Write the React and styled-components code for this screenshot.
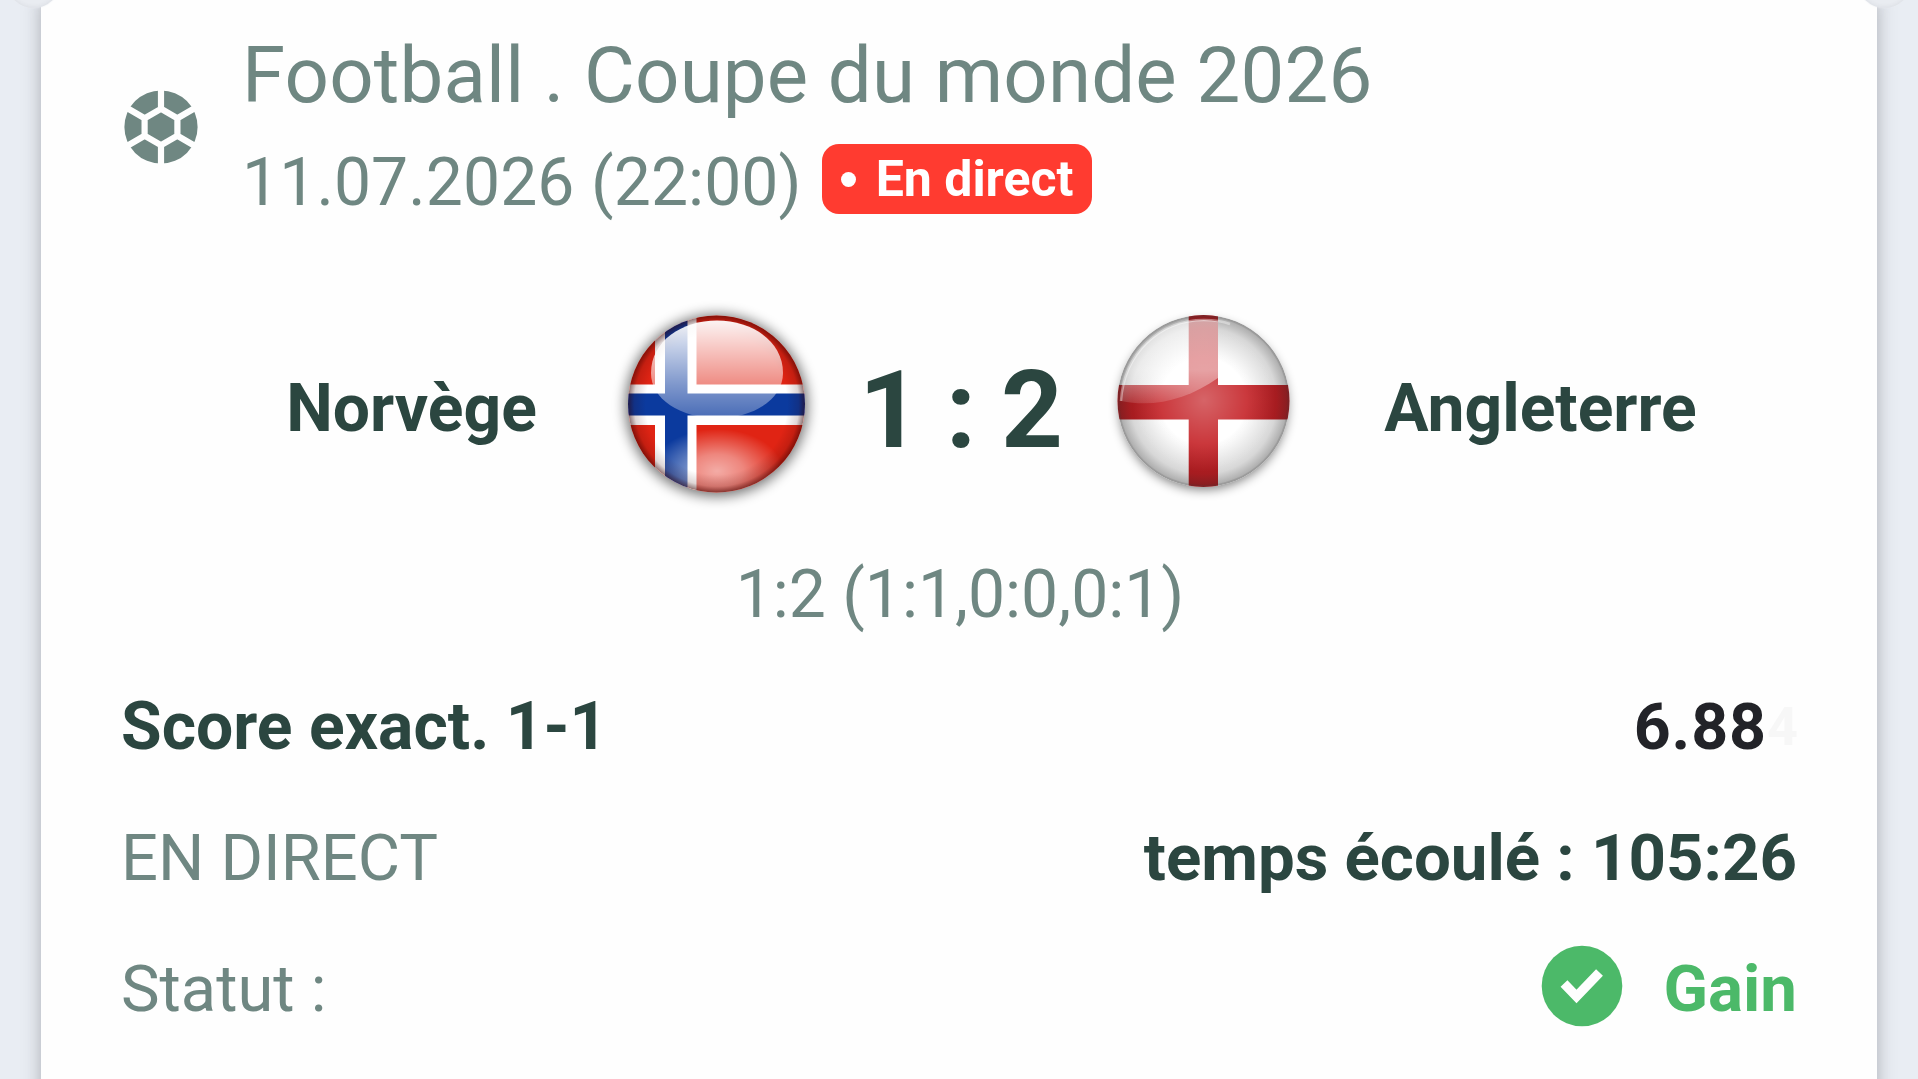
import React from "react";
import styled, { createGlobalStyle } from "styled-components";

const GlobalStyle = createGlobalStyle`
    * {
        box-sizing: border-box;
    }
    body {
        margin: 0;
        background: #e9edf3;
        font-family: Roboto, "Liberation Sans", sans-serif;
        overflow: hidden;
    }
`;

const Page = styled.main`
    height: 1079px;
    padding: 0 41px;
    overflow: hidden;
`;

const Card = styled.article`
    position: relative;
    height: 1160px;
    padding: 28px 80px 0 82px;
    background: #fefefe;
    box-shadow: 0 0 17px rgba(60, 60, 70, 0.36);
`;

// round bite taken out of the ticket edge
const Notch = styled.span`
    position: absolute;
    top: -45px;
    ${({ $side }) => $side}: -34px;
    width: 53px;
    height: 53px;
    border-radius: 50%;
    background: #e9ecf1;
    box-shadow: inset 0 -1px 4px rgba(60, 60, 70, 0.07), 0 0 2px #e9ecf1;
`;

const Header = styled.header`
    display: flex;
    height: 199px;
`;

const BallIcon = styled.svg`
    flex: none;
    width: 76px;
    height: 76px;
    margin: 61px 43px 0 0;
`;

const Title = styled.h1`
    margin: 0;
    font-size: 78px;
    font-weight: 400;
    line-height: 96px;
    letter-spacing: 0.17px;
    color: #6f8782;
    white-space: nowrap;
`;

const DateLine = styled.div`
    display: flex;
    align-items: center;
    height: 70px;
    margin-top: 20px;
    font-size: 66px;
    line-height: 70px;
    color: #6f8782;
    white-space: nowrap;
`;

const DateText = styled.time`
    padding-top: 8px;
    letter-spacing: 0.1px;
`;

const LiveBadge = styled.span`
    display: flex;
    align-items: center;
    width: 270px;
    height: 70px;
    margin-left: 20px;
    padding-left: 19px;
    border-radius: 17px;
    background: #ff3b30;
    font-size: 50px;
    font-weight: 700;
    color: #fff;

    &::before {
        content: "";
        width: 15px;
        height: 15px;
        margin-right: 20px;
        border-radius: 50%;
        background: #fff;
    }
`;

const Match = styled.section`
    display: grid;
    grid-template-columns: 487px 210px 280px 210px 487px;
    align-items: center;
    height: 221px;
    margin-top: 65px;
`;

const Team = styled.strong`
    padding-top: 12px;
    padding-left: ${({ $home }) => ($home ? "90px" : "0")};
    padding-right: ${({ $home }) => ($home ? "0" : "26px")};
    font-size: 66px;
    font-weight: 700;
    line-height: 76px;
    text-align: center;
    color: #2b4640;
`;

const Score = styled.strong`
    padding-top: 14px;
    padding-left: 1px;
    font-size: 108px;
    font-weight: 700;
    line-height: 120px;
    text-align: center;
    letter-spacing: -1px;
    color: #2b4640;
    white-space: nowrap;
`;

const FlagIcon = styled.svg`
    width: 210px;
    height: 215px;
`;

const Periods = styled.p`
    margin: 42px 0 0;
    font-size: 66px;
    line-height: 80px;
    text-align: center;
    color: #6f8782;
`;

const Details = styled.dl`
    margin: 26px 0 0 -2px;
`;

const Row = styled.div`
    display: flex;
    align-items: center;
    justify-content: space-between;
    height: 131px;
`;

const Label = styled.dt`
    font-size: ${({ $strong }) => ($strong ? "66px" : "65px")};
    font-weight: ${({ $strong }) => ($strong ? 700 : 400)};
    color: ${({ $strong }) => ($strong ? "#2b4640" : "#6f8782")};
`;

const Value = styled.dd`
    display: flex;
    align-items: center;
    gap: 40px;
    margin: 0;
    font-size: 65.4px;
    font-weight: 700;
    color: ${({ $color }) => $color || "#2b4640"};
`;

const Odds = styled(Value)`
    gap: 0;
    font-size: 64.5px;
    letter-spacing: 0.9px;
`;

const FadedDigit = styled.span`
    width: 30px;
    font-size: 54px;
    letter-spacing: 0;
    color: #f7f7f7;
`;

const CheckIcon = styled.svg`
    width: 82px;
    height: 82px;
    margin-top: -6px;
`;

const Football = () => (
    <BallIcon viewBox="-38 -38 76 76">
        <circle r="36.600" fill="#6f8782" />
        <path
            d="M0-18.200 16.400-8.700V8.700L0 18.200-16.400 8.700V-8.700ZM0-18.200V-38M0 18.200V38M16.400-8.700 34-19M16.400 8.700 34 19M-16.400-8.700-34-19M-16.400 8.700-34 19"
            fill="none"
            stroke="#fefefe"
            strokeWidth="6.2"
        />
    </BallIcon>
);

const Norway = () => (
    <FlagIcon viewBox="0 0 210 215">
        <defs>
            <clipPath id="no-clip"><circle cx="106.5" cy="109" r="88.500" /></clipPath>
            <radialGradient id="no-rim">
                <stop offset="0.8" stopColor="#300" stopOpacity="0" />
                <stop offset="0.93" stopColor="#300" stopOpacity="0.16" />
                <stop offset="1" stopColor="#300" stopOpacity="0.55" />
            </radialGradient>
            <radialGradient id="no-glow">
                <stop offset="0" stopColor="#fff" stopOpacity="0.62" />
                <stop offset="0.4" stopColor="#fff" stopOpacity="0.45" />
                <stop offset="1" stopColor="#fff" stopOpacity="0" />
            </radialGradient>
            <linearGradient id="no-gloss" x1="0" y1="0" x2="0" y2="1">
                <stop offset="0" stopColor="#fff" stopOpacity="0.95" />
                <stop offset="0.65" stopColor="#fff" stopOpacity="0.48" />
                <stop offset="1" stopColor="#fff" stopOpacity="0.25" />
            </linearGradient>
            <filter id="no-blur" x="-20%" y="-20%" width="140%" height="140%"><feGaussianBlur stdDeviation="6.5" /></filter>
        </defs>
        <circle cx="106.5" cy="110.500" r="91" fill="#000" opacity="0.55" filter="url(#no-blur)" />
        <g clipPath="url(#no-clip)">
            <path fill="#e02414" d="M0 0h210v215H0z" />
            <path fill="#fff" d="M45 0h41.500v215H45zM0 89.500h210v40.500H0z" />
            <path fill="#0b3a9e" d="M55 0h22.500v215H55zM0 98.500h210v22H0z" />
            <ellipse cx="107" cy="176" rx="66" ry="42" fill="url(#no-glow)" />
            <circle cx="106.5" cy="109" r="88.500" fill="url(#no-rim)" />
            <path
                d="M41 78C41 46 72 25.500 107 25.500S173 46 173 78C173 104 144 123 107 123S41 104 41 78Z"
                fill="url(#no-gloss)"
            />
        </g>
    </FlagIcon>
);

const England = () => (
    <FlagIcon viewBox="0 0 210 215">
        <defs>
            <clipPath id="en-clip"><circle cx="103.5" cy="106" r="86" /></clipPath>
            <radialGradient id="en-rim">
                <stop offset="0.5" stopColor="#222" stopOpacity="0" />
                <stop offset="0.85" stopColor="#222" stopOpacity="0.18" />
                <stop offset="1" stopColor="#222" stopOpacity="0.4" />
            </radialGradient>
            <radialGradient id="en-glow">
                <stop offset="0" stopColor="#fff" stopOpacity="0.32" />
                <stop offset="1" stopColor="#fff" stopOpacity="0" />
            </radialGradient>
            <linearGradient id="en-gloss" x1="0" y1="0" x2="0" y2="1">
                <stop offset="0" stopColor="#fff" stopOpacity="0.6" />
                <stop offset="0.6" stopColor="#fff" stopOpacity="0.5" />
                <stop offset="1" stopColor="#fff" stopOpacity="0.12" />
            </linearGradient>
            <filter id="en-blur" x="-20%" y="-20%" width="140%" height="140%"><feGaussianBlur stdDeviation="5.5" /></filter>
        </defs>
        <circle cx="103.5" cy="110.500" r="84" fill="#000" opacity="0.5" filter="url(#en-blur)" />
        <g clipPath="url(#en-clip)">
            <path fill="#fff" d="M0 0h210v215H0z" />
            <path fill="#c31b20" d="M88.700 0h29.300v215H88.700zM0 90h210v34.500H0z" />
            <circle cx="103.5" cy="106" r="86" fill="url(#en-rim)" />
            <circle cx="104" cy="105" r="72" fill="url(#en-glow)" />
            <path d="M21 106C24 58 60 25 104 25Q111 25 118 26.500V83C88 104 55 113 21 106Z" fill="url(#en-gloss)" />
            <path d="M21 106C24 58 60 25 104 25C114 25 122 26 130 29" fill="none" stroke="#fff" strokeOpacity="0.4" strokeWidth="2.500" />
        </g>
        <circle cx="103.5" cy="106" r="85" fill="none" stroke="#444" strokeOpacity="0.15" strokeWidth="2" />
    </FlagIcon>
);

const Check = () => (
    <CheckIcon viewBox="0 0 82 82">
        <circle cx="41" cy="41" r="40.300" fill="#4cb969" />
        <path d="M23 38.500 35.500 51.500 58.500 27.500" fill="none" stroke="#fefefe" strokeWidth="9.5" />
    </CheckIcon>
);

const App = () => (
    <Page>
        <GlobalStyle />
        <Card>
            <Notch $side="left" />
            <Notch $side="right" />

            <Header>
                <Football />
                <div>
                    <Title>Football . Coupe du monde 2026</Title>
                    <DateLine>
                        <DateText>11.07.2026 (22:00)</DateText>
                        <LiveBadge>En direct</LiveBadge>
                    </DateLine>
                </div>
            </Header>

            <Match>
                <Team $home>Norvège</Team>
                <Norway />
                <Score>1 : 2</Score>
                <England />
                <Team>Angleterre</Team>
            </Match>
            <Periods>1:2 (1:1,0:0,0:1)</Periods>

            <Details>
                <Row>
                    <Label $strong>Score exact. 1-1</Label>
                    <Odds $color="#222328">6.88<FadedDigit aria-hidden="true">4</FadedDigit></Odds>
                </Row>
                <Row>
                    <Label>EN DIRECT</Label>
                    <Value>temps écoulé : 105:26</Value>
                </Row>
                <Row>
                    <Label>Statut :</Label>
                    <Value $color="#4cb969"><Check />Gain</Value>
                </Row>
            </Details>
        </Card>
    </Page>
);

export default App;
